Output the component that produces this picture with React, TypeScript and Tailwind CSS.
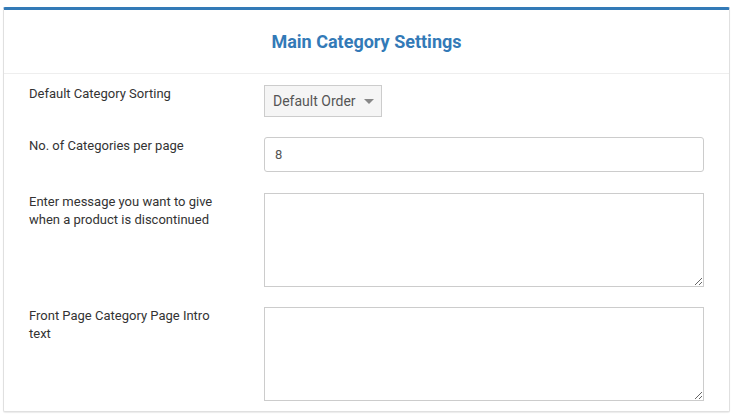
const font = { fontFamily: 'Roboto, "Liberation Sans", sans-serif' }

function Row({ label, children }: { label: React.ReactNode; children: React.ReactNode }) {
  return (
    <div className="flex">
      <div className="w-[260px] shrink-0 pl-[25px] pr-4 text-[13px] leading-[18px] text-[#333]">{label}</div>
      <div className="flex-1">{children}</div>
    </div>
  )
}

export default function App() {
  return (
    <div className="bg-white pt-[7px] px-[3px] pb-[7px]" style={font}>
      <div className="bg-white border border-[#e0e0e0] border-t-[3px] border-t-[#337ab7] rounded-[2px] shadow-[0_1px_1px_rgba(0,0,0,0.08)]">
        {/* Header */}
        <div className="h-[64px] flex items-center justify-center border-b border-[#eeeeee]">
          <h2 className="text-[18px] font-bold text-[#337ab7] leading-none">Main Category Settings</h2>
        </div>

        <div className="pt-[11px] pb-[10px] pr-[25px] flex flex-col gap-[20px]">
          <Row label="Default Category Sorting">
            <div className="inline-flex items-center h-[32px] w-[118px] border border-[#cccccc] bg-[#f5f5f5] pl-[8px] text-[14px] text-[#555]">
              <span>Default Order</span>
              <svg className="ml-[8px] mt-[1px]" width="10" height="6" viewBox="0 0 10 6">
                <path d="M0 0h10L5 5z" fill="#888" />
              </svg>
            </div>
          </Row>
          <Row label="No. of Categories per page">
            <input
              defaultValue="8"
              className="w-full h-[35px] border border-[#cccccc] rounded-[3px] px-[10px] text-[13px] text-[#555] outline-none"
              style={font}
            />
          </Row>
          <div className="mt-[1px]">
            <Row label={<>Enter message you want to give<br />when a product is discontinued</>}>
              <textarea className="block w-full h-[94px] border border-[#cccccc] outline-none" />
            </Row>
          </div>
          <Row label={<>Front Page Category Page Intro<br />text</>}>
            <textarea className="block w-full h-[94px] border border-[#cccccc] outline-none" />
          </Row>
        </div>
      </div>
    </div>
  )
}
